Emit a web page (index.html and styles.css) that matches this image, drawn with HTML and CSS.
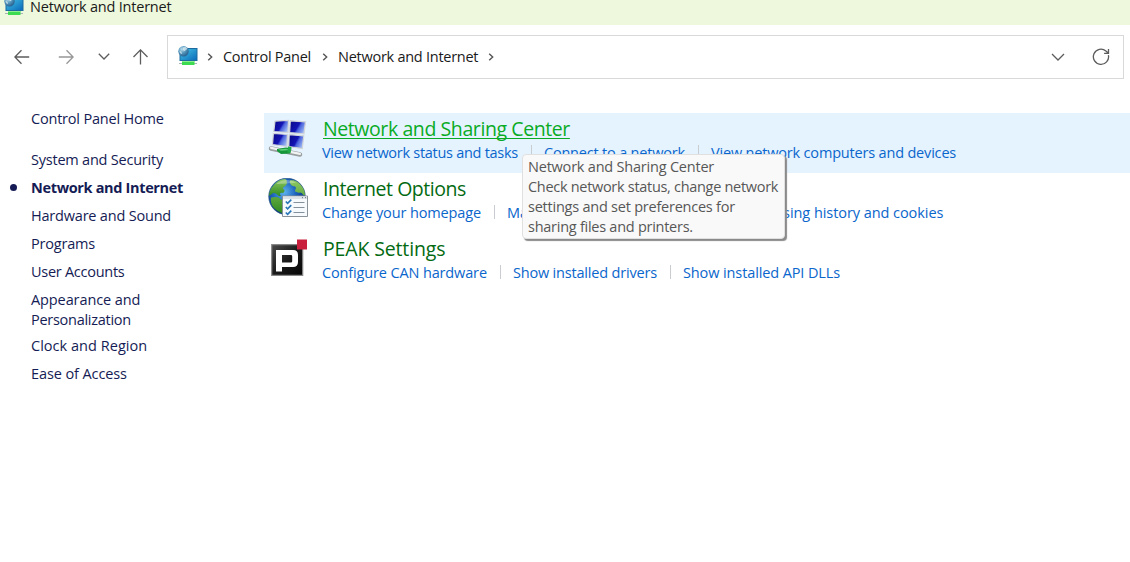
FILE: index.html
```html
<!DOCTYPE html>
<html lang="en">
<head>
<meta charset="utf-8">
<title>Network and Internet</title>
<link rel="stylesheet" href="styles.css">
</head>
<body>
<svg class="defs" aria-hidden="true">
  <defs>
    <linearGradient id="screen" x1="0" y1="0" x2="1" y2="1"><stop offset="0" stop-color="#45c3e4"/><stop offset="1" stop-color="#0b6cbb"/></linearGradient>
    <radialGradient id="ball" cx=".35" cy=".3" r=".75"><stop offset="0" stop-color="#b9dcec"/><stop offset=".5" stop-color="#5596bb"/><stop offset="1" stop-color="#255d8c"/></radialGradient>
    <linearGradient id="pane" x1="0" y1=".2" x2="1" y2=".7"><stop offset="0" stop-color="#0a0a8c"/><stop offset=".5" stop-color="#1414b4"/><stop offset=".62" stop-color="#4a62dc"/><stop offset="1" stop-color="#a5c0f5"/></linearGradient>
    <radialGradient id="sea" cx=".42" cy=".38" r=".65"><stop offset="0" stop-color="#5fb4f0"/><stop offset=".5" stop-color="#1c62bd"/><stop offset="1" stop-color="#0b2a70"/></radialGradient>
    <linearGradient id="land" x1="0" y1="0" x2="0" y2="1"><stop offset="0" stop-color="#8fc862"/><stop offset="1" stop-color="#2f8a20"/></linearGradient>
    <linearGradient id="dark" x1="0" y1="0" x2="1" y2="1"><stop offset="0" stop-color="#4a4a4a"/><stop offset=".5" stop-color="#1b1b1b"/><stop offset="1" stop-color="#050505"/></linearGradient>
    <symbol id="netpc" viewBox="0 0 20 20">
      <path d="M1 17.500h18" stroke="#a9b3b5" stroke-width="1"/>
      <rect x="4" y="15" width="12.500" height="4" fill="#3ddb4f"/>
      <rect x="4" y="15" width="12.500" height="1" fill="#8df08e"/>
      <path d="M1.500 2H19.500v13h-18z" fill="#1d6a9f"/>
      <path d="M2.500 3h16v11h-16z" fill="url(#screen)"/>
      <circle cx="5.500" cy="5.300" r="5.200" fill="url(#ball)"/>
      <path d="M5 1.500c2-1 3.500-.5 4.500 1-.5 1.500-2 1-2.500 2.500-1.500.5-2.500-1.500-2-3.500zM1.500 5c1.500 0 2.500 1 2.500 3-1.500 0-2.500-1.500-2.500-3z" fill="#e3f1f6" opacity=".7"/>
    </symbol>
    <symbol id="crumb" viewBox="0 0 6 8"><path d="M1.200.7 4.700 4 1.200 7.300" fill="none" stroke="#555" stroke-width="1.400"/></symbol>
  </defs>
</svg>

<header class="titlebar">
  <svg class="title-icon"><use href="#netpc"/></svg>
  <span>Network and Internet</span>
</header>

<div class="toolbar">
  <nav class="history">
    <svg class="back" viewBox="0 0 16 16"><path d="M.8 8h14.400M7.500 1.300.9 8l6.600 6.700"/></svg>
    <svg class="forward" viewBox="0 0 16 16"><path d="M.8 8h14.400M8.500 1.300 15.100 8l-6.600 6.700"/></svg>
    <svg class="recent" viewBox="0 0 12 7"><path d="m.8.8 5.200 5.200L11.200.8"/></svg>
    <svg class="up" viewBox="0 0 16 16"><path d="M8.500 15.500V.9M1.500 8l7-7.100 7 7.100"/></svg>
  </nav>
  <div class="address">
    <svg class="addr-icon"><use href="#netpc"/></svg>
    <svg class="sep"><use href="#crumb"/></svg>
    <span class="crumb-root">Control Panel</span>
    <svg class="sep"><use href="#crumb"/></svg>
    <span class="crumb-page">Network and Internet</span>
    <svg class="sep"><use href="#crumb"/></svg>
    <svg class="drop" viewBox="0 0 14 8"><path d="m1 1 6 6 6-6"/></svg>
    <svg class="reload" viewBox="0 0 18 18"><path d="M16.400 7.200A7.600 7.600 0 1 1 13.900 3l2.300 2M16.500.9v4.400h-4.400"/></svg>
  </div>
</div>

<main class="body">
  <aside class="sidebar">
    <a class="home">Control Panel Home</a>
    <a class="mid">System and Security</a>
    <a class="current">Network and Internet</a>
    <a>Hardware and Sound</a>
    <a>Programs</a>
    <a class="accounts">User Accounts</a>
    <a class="wide">Appearance and<br><span class="tight">Personalization</span></a>
    <a class="region">Clock and Region</a>
    <a class="wide">Ease of Access</a>
  </aside>

  <section class="categories">
    <article class="category hovered">
      <svg class="cat-icon" viewBox="0 0 40 40">
        <g stroke="#d3d6d8" stroke-width="1.200" fill="url(#pane)">
          <path d="m7 3.200 13.500-.7-.5 12-14.200-1z"/><path d="m22.300 2.800 15.200 1-1.500 12-14.400-1.200z"/>
          <path d="m5.400 15.500 14 1-.4 12-14.500-2z"/><path d="m21.200 16.600 14.600 1.200-1.500 12.700-13.500-2z"/>
        </g>
        <path d="m3 30.500 29 6" stroke="#9a9fa0" stroke-width="4.500" stroke-linecap="round"/>
        <path d="m3 29.800 29 6" stroke="#f1f3f3" stroke-width="2.200" stroke-linecap="round"/>
        <path d="m9 31 9-1.500 5.500 1-1.500 5-9 .5-4-3z" fill="#16963a"/>
        <path d="m10 31.500 8-.8 4 1.300-9 .8z" fill="#62d37b"/>
        <path d="m20 28.500 3.500.5-1 6-3-.5z" fill="#23ab48"/>
      </svg>
      <div class="details">
        <h2 class="h-sharing">Network and Sharing Center</h2>
        <div class="links"><a class="tight">View network status and tasks</a><a class="l-connect">Connect to a network</a><a>View network computers and devices</a></div>
      </div>
      <div class="tooltip"><span class="tip-a">Network and Sharing Center</span><br><span class="tip-b">Check network status, change network</span><br><span class="tip-c">settings and set preferences for</span><br><span class="tip-d">sharing files and printers.</span></div>
    </article>

    <article class="category">
      <svg class="cat-icon" viewBox="0 0 40 40">
        <circle cx="19" cy="18.500" r="18.300" fill="url(#sea)" stroke="#24527f" stroke-width=".6"/>
        <path d="M5 8c3-4 7-7 12-7 3 1 1 3 2 4-1 4-4 3-4 6 2 0 2 3 0 4-3-1-4 1-2 3-3 1-4-3-7-3-2 0-3 2-5 3 0-4 2-8 4-10z" fill="url(#land)"/>
        <path d="M22 2.500c5-1 9 2 12 6 2 3 3 6 3 9-3 0-2-3-5-3-2 1-3-1-5-1 0-2 2-4 0-5-3 0-6-3-5-6zM3 19.500c4-1 8-1 10 2 3 1 4 4 3 7-1 3-1 5-2 6.500C6 32 2 27 3 19.500z" fill="url(#land)"/>
        <path d="M8 6c6-5 15-5 20-1-5 0-13 1-20 1z" fill="#fff" opacity=".3"/>
        <path d="M14.500 18h25v20.500h-25z" fill="#f6fafc" stroke="#899199"/>
        <path d="M15 18.500h24v2.500H15z" fill="#dce3e8"/><path d="M34 19.700h1M37 19.700h1" stroke="#6a747c"/>
        <path d="m17.800 23.500 1.800 1.800 3.700-3.700M17.800 29l1.800 1.800 3.700-3.700M17.800 34.500l1.800 1.800 3.700-3.700" fill="none" stroke="#2876b9" stroke-width="1.600"/>
        <path d="M25.500 24.500h11M25.500 29.500h11M25.500 34.500h11" stroke="#85919a" stroke-width="1.100"/>
      </svg>
      <div class="details">
        <h2 class="h-options">Internet Options</h2>
        <div class="links"><a class="l-home">Change your homepage</a><a>Manage browser add-ons</a><a class="l-delete">Delete browsing history and cookies</a></div>
      </div>
    </article>

    <article class="category">
      <svg class="cat-icon" viewBox="0 0 40 40">
        <path d="M3.700 6.700h31v30.600h-31z" fill="url(#dark)" stroke="#888" stroke-width="1.200"/>
        <path d="M8 12h17q5 0 5 5v7q0 5-5 5H14v4.500H8zM14 17v7.500h9q1.200 0 1.200-1.200v-5.100q0-1.200-1.200-1.200z" fill="#fff" fill-rule="evenodd"/>
        <path d="M29 1.500h10v10H29z" fill="#c91f3d"/>
      </svg>
      <div class="details">
        <h2 class="h-peak">PEAK Settings</h2>
        <div class="links"><a class="l-can">Configure CAN hardware</a><a>Show installed drivers</a><a class="l-dll">Show installed API DLLs</a></div>
      </div>
    </article>
  </section>
</main>
</body>
</html>
```
FILE: styles.css
```css
* { box-sizing: border-box; }

body {
  margin: 0;
  height: 562px;
  overflow: hidden;
  background: #fff;
  color: #1a1a1a;
  font: 14.5px/20px "Open Sans", "Noto Sans", sans-serif;
  letter-spacing: -.2px;
  white-space: nowrap;
}

svg { display: block; flex: none; }
.defs { position: absolute; width: 0; height: 0; }

.titlebar {
  display: flex;
  height: 25px;
  padding-left: 4px;
  background: #eef8dd;
}
.titlebar span { margin: -3px 0 0 6px; }
.title-icon { width: 20px; height: 20px; margin-top: -4px; }

.toolbar {
  display: flex;
  align-items: center;
  height: 64px;
  padding-right: 6px;
}
.history { display: flex; align-items: center; width: 167px; padding-left: 14px; }
.history svg, .drop, .reload { fill: none; stroke: #5c5c5c; stroke-width: 1.300; }
.back, .forward, .up { width: 16px; height: 16px; }
.history .forward { margin-left: 28px; stroke: #979797; }
.recent { width: 12px; height: 7px; margin: -1px 0 0 24px; }
.up { margin-left: 22px; }

.address {
  display: flex;
  align-items: center;
  flex: 1;
  height: 44px;
  padding: 0 13px 0 10px;
  border: 1px solid #d9d9d9;
}
.addr-icon { width: 20px; height: 20px; margin: -2px 9px 0 0; }
.sep { width: 6px; height: 8px; }
.crumb-root { width: 88px; margin: 0 11px 0 10px; letter-spacing: -.27px; }
.crumb-page { width: 141px; margin: 0 9px 0 10px; letter-spacing: -.26px; }
.drop { width: 14px; height: 8px; margin: -1px 0 0 auto; }
.reload { width: 18px; height: 18px; margin: -1px 0 0 27px; }

.body { display: flex; }

.sidebar {
  display: flex;
  flex-direction: column;
  gap: 8px;
  width: 264px;
  padding: 20px 0 0 31px;
  color: #151c55;
}
.sidebar .home { margin-bottom: 13px; }
.sidebar .mid { letter-spacing: -.22px; }
.sidebar .accounts { letter-spacing: -.27px; }
.sidebar .wide { letter-spacing: -.1px; }
.sidebar .tight { letter-spacing: -.27px; }
.sidebar .region { margin-top: -2px; letter-spacing: .03px; }
.sidebar .current {
  display: flex;
  align-items: center;
  margin-left: -21px;
  font-weight: 700;
  letter-spacing: -.34px;
}
.current::before {
  content: "";
  width: 7px;
  height: 7px;
  margin: -2px 14px 0 0;
  border-radius: 50%;
  background: #151c55;
}

.categories { flex: 1; padding-top: 24px; }
.category {
  position: relative;
  display: flex;
  height: 60px;
  padding: 5px 0 0 4px;
}
.hovered { background: #e5f3ff; }
.cat-icon { width: 40px; height: 40px; }
.details { padding-left: 14px; }

h2 {
  width: max-content;
  margin: -2px 0 0 1px;
  color: #036a12;
  font-size: 19.5px;
  font-weight: 400;
  line-height: 26px;
}
.h-sharing {
  color: #0aab24;
  letter-spacing: -.41px;
  text-decoration: underline;
  text-decoration-thickness: 1px;
  text-decoration-skip-ink: none;
  text-underline-offset: 2px;
}
.h-options { letter-spacing: -.45px; }
.h-peak { letter-spacing: -.14px; }

.links { display: flex; margin-top: 1px; color: #0a66cc; letter-spacing: -.18px; }
.links a { display: flex; }
.links a + a::before {
  content: "";
  width: 1px;
  height: 14px;
  margin: 2px 12px 0 13px;
  background: #c9ccd0;
}
.links .tight { letter-spacing: -.28px; }
.links .l-connect { letter-spacing: -.19px; }
.links .l-home { letter-spacing: -.12px; }
.links .l-delete { letter-spacing: -.06px; }
.links .l-can { letter-spacing: -.14px; }
.links .l-dll { letter-spacing: -.11px; }

.tooltip {
  position: absolute;
  z-index: 1;
  left: 258px;
  top: 41px;
  width: 263px;
  height: 85px;
  padding: 2px 0 0 5px;
  border: 1px solid #e0e0e0;
  border-radius: 4px;
  background: #f9f9f9;
  box-shadow: 2px 2px 1px #8a8a8a;
  color: #575757;
}
.tip-a { letter-spacing: -.21px; }
.tip-b { letter-spacing: -.3px; }
.tip-c { letter-spacing: -.23px; }
.tip-d { letter-spacing: -.26px; }
```
